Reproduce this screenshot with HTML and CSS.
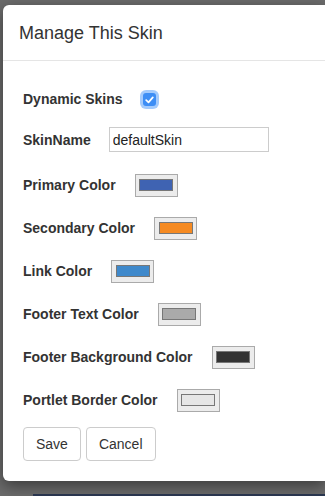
FILE: index.html
```html
<!DOCTYPE html>
<html lang="en">
<head>
    <meta charset="UTF-8">
    <meta name="viewport" content="width=device-width, initial-scale=1.0">
    <title>Manage This Skin</title>
    <link rel="stylesheet" href="styles.css">
</head>
<body>

    <!-- Sayfa arka planı (modal arkasında) -->
    <div class="page-bar"></div>

    <!-- Modal -->
    <div class="modal">
        <div class="modal-header">
            <h4>Manage This Skin</h4>
        </div>
        <div class="modal-body">
            <div class="form-row row-check">
                <label>Dynamic Skins</label>
                <span class="checkbox">
                    <svg width="9" height="8" viewBox="0 0 9 8"><path d="M1.2 4.2 L3.5 6.4 L7.8 1.4" fill="none" stroke="#fff" stroke-width="1.7" stroke-linecap="round" stroke-linejoin="round"/></svg>
                </span>
            </div>
            <div class="form-row row-name">
                <label>SkinName</label>
                <input type="text" class="text-input" value="defaultSkin">
            </div>
            <div class="form-row">
                <label>Primary Color</label>
                <span class="swatch"><span class="swatch-fill" style="background:#3f63b2"></span></span>
            </div>
            <div class="form-row">
                <label>Secondary Color</label>
                <span class="swatch"><span class="swatch-fill" style="background:#f58a22"></span></span>
            </div>
            <div class="form-row">
                <label>Link Color</label>
                <span class="swatch"><span class="swatch-fill" style="background:#3f89cb"></span></span>
            </div>
            <div class="form-row">
                <label>Footer Text Color</label>
                <span class="swatch"><span class="swatch-fill" style="background:#aaaaaa"></span></span>
            </div>
            <div class="form-row">
                <label>Footer Background Color</label>
                <span class="swatch"><span class="swatch-fill" style="background:#333333"></span></span>
            </div>
            <div class="form-row">
                <label>Portlet Border Color</label>
                <span class="swatch"><span class="swatch-fill" style="background:#e6e6e6"></span></span>
            </div>
            <div class="button-row">
                <button class="btn">Save</button>
                <button class="btn">Cancel</button>
            </div>
        </div>
    </div>

</body>
</html>
```

FILE: styles.css
```css
body {
    font-family: "Liberation Sans", Arial, sans-serif;
    background: #6b6b6b;
    margin: 0;
    padding: 5px 0 0 3px;
    height: 496px;
    box-sizing: border-box;
    overflow: hidden;
    position: relative;
    color: #333;
}

/* Arkadaki sayfanın koyu çubuğu */
.page-bar {
    position: absolute;
    left: 33px;
    right: 0;
    bottom: 0;
    height: 2px;
    background: #2b3852;
}

/* Modal kutusu (sağ kenar ekranın dışında kalıyor) */
.modal {
    width: 322px;
    height: 476px;
    background: #fff;
    border-radius: 6px 0 0 6px;
    box-shadow: 0 5px 15px rgba(0, 0, 0, 0.45);
    box-sizing: border-box;
    position: relative;
}

.modal-header {
    height: 56px;
    border-bottom: 1px solid #e5e5e5;
    padding: 0 16px;
    display: flex;
    align-items: center;
    box-sizing: border-box;
}

.modal-header h4 {
    margin: 0;
    font-size: 18px;
    font-weight: normal;
    color: #333;
    padding-top: 2px;
}

.modal-body {
    padding: 26px 20px 0;
}

.form-row {
    display: flex;
    align-items: center;
    height: 24px;
    margin-bottom: 19px;
}

.form-row label {
    font-size: 14px;
    font-weight: bold;
    color: #333;
    margin-right: 19px;
}

.row-check {
    margin-bottom: 16px;
}

.row-check label {
    margin-right: 20px;
}

.row-name {
    height: 25px;
    margin-bottom: 21px;
}

.row-name label {
    margin-right: 18px;
}

/* Mac tarzı seçili kutu */
.checkbox {
    width: 13px;
    height: 13px;
    border-radius: 3px;
    background: #3d8ef5;
    box-shadow: 0 0 0 3px rgba(90, 160, 250, 0.55);
    display: flex;
    align-items: center;
    justify-content: center;
    margin-top: 1px;
}

.text-input {
    width: 160px;
    height: 25px;
    box-sizing: border-box;
    border: 1px solid #ccc;
    padding: 0 3px;
    font-family: "Liberation Sans", Arial, sans-serif;
    font-size: 14px;
    color: #222;
    outline: none;
}

/* Renk kutuları */
.swatch {
    width: 43px;
    height: 23px;
    box-sizing: border-box;
    border: 1px solid #aaa;
    background: #ececec;
    display: flex;
    align-items: center;
    justify-content: center;
}

.swatch-fill {
    width: 34px;
    height: 12px;
    border: 1px solid #777;
    box-sizing: border-box;
}

.button-row {
    display: flex;
    gap: 5px;
    margin-top: -4px;
}

.btn {
    font-family: "Liberation Sans", Arial, sans-serif;
    font-size: 14px;
    color: #333;
    background: #fff;
    border: 1px solid #ccc;
    border-radius: 4px;
    padding: 6px 12px;
    line-height: 20px;
    margin: 0;
    cursor: pointer;
}
```
